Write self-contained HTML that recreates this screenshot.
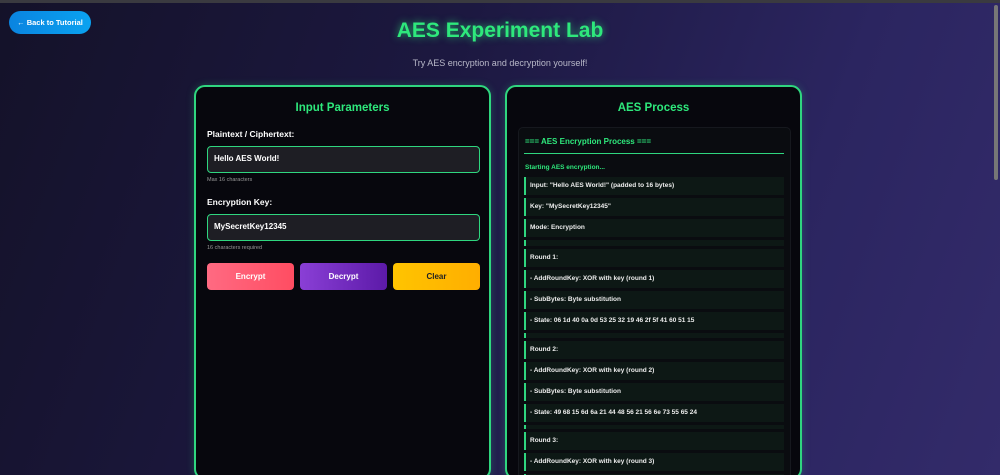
<!DOCTYPE html>
<html><head><style>
*{box-sizing:border-box;margin:0;padding:0}
html,body{width:1000px;height:475px;overflow:hidden}
body{font-family:"Liberation Sans",sans-serif;background:linear-gradient(110deg,#141229 0%,#1c1840 40%,#2b2560 75%,#332b6a 100%);position:relative;color:#fff}
.topbar{position:absolute;left:0;top:0;width:1000px;height:3px;background:#3a3a40}
.scroll{position:absolute;right:2px;top:5px;width:4px;height:175px;background:#777;border-radius:2px}
.back{position:absolute;left:9px;top:11px;width:82px;height:23px;border-radius:12px;background:linear-gradient(90deg,#0a84e0,#0aa2f0);font-size:7.5px;font-weight:bold;line-height:23px;text-align:center;color:#fff}
h1{position:absolute;left:0;width:1000px;top:19px;text-align:center;font-size:21px;color:#2ee87c;text-shadow:0 0 8px rgba(46,232,124,.7)}
.sub{position:absolute;left:0;width:1000px;top:58px;text-align:center;font-size:9px;color:#b8b8c8}
.panel{position:absolute;top:85px;width:297px;height:395px;border:2px solid #2fd67f;border-radius:11px;background:#07070d;box-shadow:0 0 8px rgba(46,214,127,.25);overflow:hidden}
.panel h2{text-align:center;font-size:11.5px;color:#2ee87c;margin-top:15px}
.lbl{position:absolute;left:11px;font-size:8.5px;font-weight:bold}
.inp{position:absolute;left:11px;width:273px;height:27px;border:1.5px solid #2fd67f;border-radius:4px;background:#1e1e24;font-size:8px;font-weight:bold;padding-left:6px;line-height:24px}
.hint{position:absolute;left:11px;font-size:5.5px;color:#999}
.btn{position:absolute;top:176px;width:87px;height:27px;border-radius:4px;font-size:8px;font-weight:bold;text-align:center;line-height:27px}
.log{position:absolute;left:11px;top:40px;width:273px;height:400px;background:#0a0c10;border-radius:5px;border:1px solid #16181e}
.lh{position:absolute;left:6px;top:9px;font-size:8px;font-weight:bold;color:#2ee87c}
.ln{position:absolute;left:5px;top:25px;width:260px;height:1px;background:#2fd67f}
.st{position:absolute;left:6px;top:36px;font-size:6.5px;font-weight:bold;color:#2ee87c}
.entries{position:absolute;left:5px;top:49px;width:260px}
.e{height:18px;margin-bottom:3px;background:#0d1815;border-left:2px solid #2fd67f;font-size:6.5px;font-weight:bold;line-height:18px;padding-left:4px;color:#eee}
.e.x{height:5px}
</style></head><body>
<div class="topbar"></div><div class="scroll"></div>
<div class="back">← Back to Tutorial</div>
<h1>AES Experiment Lab</h1>
<div class="sub">Try AES encryption and decryption yourself!</div>
<div class="panel" style="left:194px">
<h2>Input Parameters</h2>
<div class="lbl" style="top:42px">Plaintext / Ciphertext:</div>
<div class="inp" style="top:59px">Hello AES World!</div>
<div class="hint" style="top:90px">Max 16 characters</div>
<div class="lbl" style="top:110px">Encryption Key:</div>
<div class="inp" style="top:127px">MySecretKey12345</div>
<div class="hint" style="top:158px">16 characters required</div>
<div class="btn" style="left:11px;background:linear-gradient(90deg,#ff6a82,#ff4d62)">Encrypt</div>
<div class="btn" style="left:104px;background:linear-gradient(90deg,#8a3fd6,#5c1aa8)">Decrypt</div>
<div class="btn" style="left:197px;background:linear-gradient(90deg,#ffc400,#ffae00);color:#222">Clear</div>
</div>
<div class="panel" style="left:505px">
<h2>AES Process</h2>
<div class="log">
<div class="lh">=== AES Encryption Process ===</div>
<div class="ln"></div>
<div class="st">Starting AES encryption...</div>
<div class="entries">
<div class="e">Input: "Hello AES World!" (padded to 16 bytes)</div>
<div class="e">Key: "MySecretKey12345"</div>
<div class="e">Mode: Encryption</div>
<div class="e x" style="height:6px"></div>
<div class="e">Round 1:</div>
<div class="e">- AddRoundKey: XOR with key (round 1)</div>
<div class="e">- SubBytes: Byte substitution</div>
<div class="e">- State: 06 1d 40 0a 0d 53 25 32 19 46 2f 5f 41 60 51 15</div>
<div class="e x"></div>
<div class="e">Round 2:</div>
<div class="e">- AddRoundKey: XOR with key (round 2)</div>
<div class="e">- SubBytes: Byte substitution</div>
<div class="e">- State: 49 68 15 6d 6a 21 44 48 56 21 56 6e 73 55 65 24</div>
<div class="e x" style="height:4px"></div>
<div class="e">Round 3:</div>
<div class="e">- AddRoundKey: XOR with key (round 3)</div>
<div class="e"></div>
</div>
</div>
</div>
</body></html>
